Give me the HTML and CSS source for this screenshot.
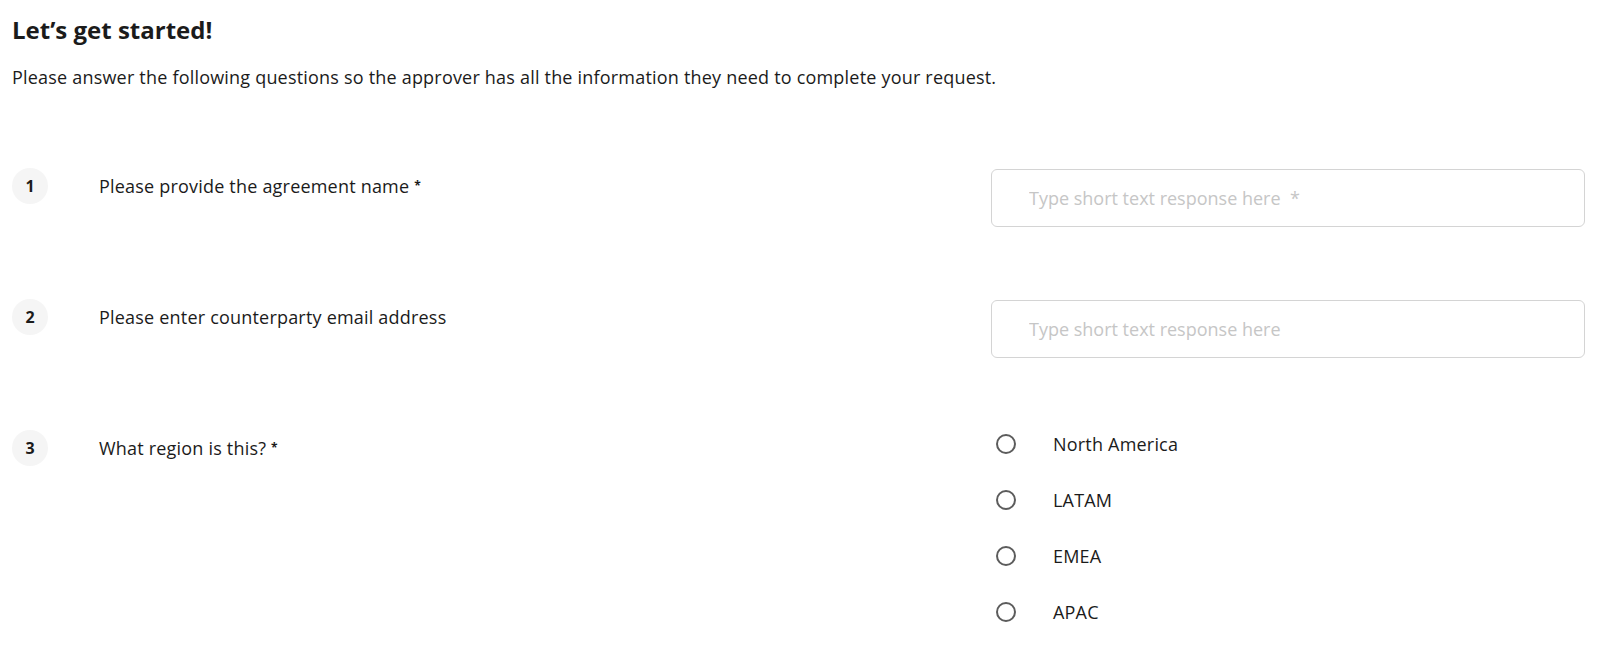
FILE: index.html
```html
<!DOCTYPE html>
<html lang="en">
<head>
  <meta charset="UTF-8">
  <title>Let’s get started!</title>
  <link rel="stylesheet" href="styles.css">
</head>
<body>
  <main class="intake">
    <header class="intro">
      <h1>Let’s get started!</h1>
      <p>Please answer the following questions so the approver has all the information they need to complete your request.</p>
    </header>

    <ol class="questions">
      <!-- short text, required -->
      <li class="question">
        <div class="question-label">
          <span class="question-num">1</span>
          <span class="question-text">Please provide the agreement name <sup class="req">*</sup></span>
        </div>
        <div class="question-answer">
          <input class="text-field" type="text" placeholder="Type short text response here &nbsp;*">
        </div>
      </li>

      <!-- short text, optional -->
      <li class="question">
        <div class="question-label">
          <span class="question-num">2</span>
          <span class="question-text">Please enter counterparty email address</span>
        </div>
        <div class="question-answer">
          <input class="text-field" type="text" placeholder="Type short text response here">
        </div>
      </li>

      <!-- single choice -->
      <li class="question">
        <div class="question-label">
          <span class="question-num">3</span>
          <span class="question-text">What region is this? <sup class="req">*</sup></span>
        </div>
        <div class="question-answer">
          <div class="choices">
            <label class="choice"><input type="radio" name="region"><span>North America</span></label>
            <label class="choice"><input type="radio" name="region"><span>LATAM</span></label>
            <label class="choice"><input type="radio" name="region"><span>EMEA</span></label>
            <label class="choice"><input type="radio" name="region"><span>APAC</span></label>
          </div>
        </div>
      </li>
    </ol>
  </main>
</body>
</html>
```

FILE: styles.css
```css
body {
  margin: 0;
  font-family: 'Open Sans', 'Noto Sans', Arial, sans-serif;
  color: #1b1b1b;
  background: #fff;
}
.intake {
  padding: 14px 15px 0 12px;
}
.intro h1 {
  margin: 0;
  font-size: 24px;
  line-height: 32px;
  font-weight: 700;
}
.intro p {
  margin: 18px 0 0 0;
  font-size: 18px;
  line-height: 26px;
  letter-spacing: 0.2px;
}
.questions {
  list-style: none;
  margin: 78px 0 0 0;
  padding: 0;
  display: flex;
  flex-direction: column;
  gap: 72px;
}
.question {
  display: grid;
  grid-template-columns: 1fr 594px;
  align-items: start;
}
.question-label {
  display: flex;
  align-items: center;
  min-height: 36px;
}
.question-num {
  flex: none;
  width: 36px;
  height: 36px;
  border-radius: 50%;
  background: #f5f5f5;
  display: flex;
  align-items: center;
  justify-content: center;
  font-size: 16px;
  font-weight: 700;
  margin-right: 51px;
}
.question-text {
  font-size: 18px;
  line-height: 24px;
  letter-spacing: 0.2px;
}
.req {
  font-size: 12px;
  font-weight: 700;
  vertical-align: 3px;
  line-height: 0;
}
.text-field {
  display: block;
  box-sizing: border-box;
  width: 100%;
  height: 58px;
  margin: 1px 0 0 0;
  padding: 0 20px 0 37px;
  border: 1px solid #d4d4d4;
  border-radius: 6px;
  font-family: inherit;
  font-size: 18px;
  color: #1b1b1b;
  background: #fff;
}
.text-field::placeholder {
  color: #c6c6c6;
}
.choices {
  display: flex;
  flex-direction: column;
  gap: 32px;
  padding-top: 2px;
}
.choice {
  display: flex;
  align-items: center;
  height: 24px;
  font-size: 18px;
  letter-spacing: 0.2px;
  cursor: pointer;
}
.choice input {
  appearance: none;
  flex: none;
  box-sizing: border-box;
  width: 20px;
  height: 20px;
  margin: 0 37px 0 5px;
  border: 2px solid #5c5c5c;
  border-radius: 50%;
  background: #fff;
}
.choice input:checked {
  box-shadow: inset 0 0 0 4px #fff;
  background: #1b1b1b;
}
```
